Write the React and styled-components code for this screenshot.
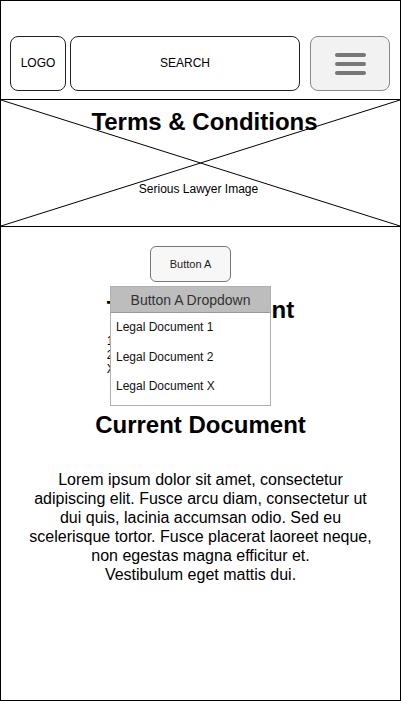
import React from "react";
import styled, { createGlobalStyle } from "styled-components";

const GlobalStyle = createGlobalStyle`
  body {
    margin: 0;
    background: #fff;
    font-family: "Liberation Sans", Arial, sans-serif;
    color: #000;
  }
`;

const docs = ["Legal Document 1", "Legal Document 2", "Legal Document X"];

export default function App() {
  return (
    <>
      <GlobalStyle />
      <Frame>
        <Header>
          <Box $w="56px">LOGO</Box>
          <Box $w="230px">SEARCH</Box>
          <MenuButton aria-label="menu">
            <span />
            <span />
            <span />
          </MenuButton>
        </Header>

        <Banner>
          <Cross viewBox="0 0 100 100" preserveAspectRatio="none">
            <line x1="0" y1="0" x2="100" y2="100" vectorEffect="non-scaling-stroke" />
            <line x1="0" y1="100" x2="100" y2="0" vectorEffect="non-scaling-stroke" />
          </Cross>
          <BannerTitle>Terms &amp; Conditions</BannerTitle>
          <Caption>Serious Lawyer Image</Caption>
        </Banner>

        <Content>
          <ButtonWrap>
            <SmallButton>Button A</SmallButton>
            <Dropdown>
              <DropdownHead>Button A Dropdown</DropdownHead>
              {docs.map((d) => (
                <DropdownItem key={d}>{d}</DropdownItem>
              ))}
            </Dropdown>
          </ButtonWrap>

          <Toc>
            <Heading>Table of Content</Heading>
            <TocList>
              <li>1. Terms</li>
              <li>2. Privacy</li>
              <li>X. Other</li>
            </TocList>
          </Toc>

          <Heading $top="25px">Current Document</Heading>
          <Body>
            Lorem ipsum dolor sit amet, consectetur adipiscing elit. Fusce arcu
            diam, consectetur ut dui quis, lacinia accumsan odio. Sed eu
            scelerisque tortor. Fusce placerat laoreet neque, non egestas magna
            efficitur et.
            <br />
            Vestibulum eget mattis dui.
          </Body>
        </Content>
      </Frame>
    </>
  );
}

const Frame = styled.div`
  box-sizing: border-box;
  width: 401px;
  height: 701px;
  border: 1px solid #000;
  overflow: hidden;
`;

const Header = styled.div`
  display: flex;
  align-items: stretch;
  gap: 4px;
  padding: 35px 0 0 9px;
  height: 55px;
`;

const Box = styled.div`
  box-sizing: border-box;
  width: ${(p) => p.$w};
  border: 1px solid #222;
  border-radius: 8px;
  display: flex;
  align-items: center;
  justify-content: center;
  font-size: 12px;
  padding-bottom: 2px;
`;

const MenuButton = styled.div`
  box-sizing: border-box;
  width: 80px;
  margin-left: 6px;
  border: 1px solid #888;
  border-radius: 8px;
  background: #f2f2f2;
  display: flex;
  flex-direction: column;
  align-items: center;
  justify-content: center;
  gap: 5px;
  span {
    display: block;
    width: 31px;
    height: 4px;
    border-radius: 2px;
    background: #777;
  }
`;

const Banner = styled.div`
  position: relative;
  margin-top: 8px;
  height: 126px;
  border-top: 1px solid #000;
  border-bottom: 1px solid #000;
  display: flex;
  flex-direction: column;
  align-items: center;
`;

const Cross = styled.svg`
  position: absolute;
  inset: 0;
  width: 100%;
  height: 100%;
  line {
    stroke: #000;
    stroke-width: 1;
  }
`;

const BannerTitle = styled.h1`
  position: relative;
  margin: 8px 0 0 8px;
  font-size: 24px;
  font-weight: 700;
  line-height: 28px;
`;

const Caption = styled.div`
  position: relative;
  margin: 46px 4px 0 0;
  font-size: 12px;
`;

const Content = styled.div`
  display: flex;
  flex-direction: column;
  align-items: center;
  padding-top: 19px;
`;

const ButtonWrap = styled.div`
  position: relative;
  z-index: 2;
  align-self: flex-start;
  margin-left: 149px;
`;

const SmallButton = styled.div`
  box-sizing: border-box;
  width: 81px;
  height: 36px;
  border: 1px solid #777;
  border-radius: 6px;
  background: #f7f7f7;
  display: flex;
  align-items: center;
  justify-content: center;
  font-size: 11px;
  color: #222;
`;

const Dropdown = styled.div`
  position: absolute;
  top: 40px;
  left: -40px;
  box-sizing: border-box;
  width: 161px;
  border: 1px solid #b0b0b0;
  background: #fff;
  padding-bottom: 3px;
`;

const DropdownHead = styled.div`
  height: 25px;
  background: #bdbdbd;
  border-bottom: 1px solid #999;
  display: flex;
  align-items: center;
  justify-content: center;
  font-size: 14px;
  color: #333;
`;

const DropdownItem = styled.div`
  box-sizing: border-box;
  height: 29.5px;
  display: flex;
  align-items: center;
  padding: 0 0 1px 5px;
  font-size: 12px;
  color: #111;
`;

const Toc = styled.div`
  display: flex;
  flex-direction: column;
  align-items: flex-start;
  margin-top: 4px;
`;

const Heading = styled.h2`
  margin: ${(p) => p.$top || "0"} 0 0;
  font-size: 24px;
  font-weight: 700;
  line-height: 48px;
  align-self: center;
`;

const TocList = styled.ul`
  list-style: none;
  margin: 0;
  padding: 0;
  font-size: 12px;
  line-height: 14px;
`;

const Body = styled.p`
  margin: 21px 0 0;
  width: 350px;
  text-align: center;
  font-size: 16px;
  line-height: 19px;
`;
